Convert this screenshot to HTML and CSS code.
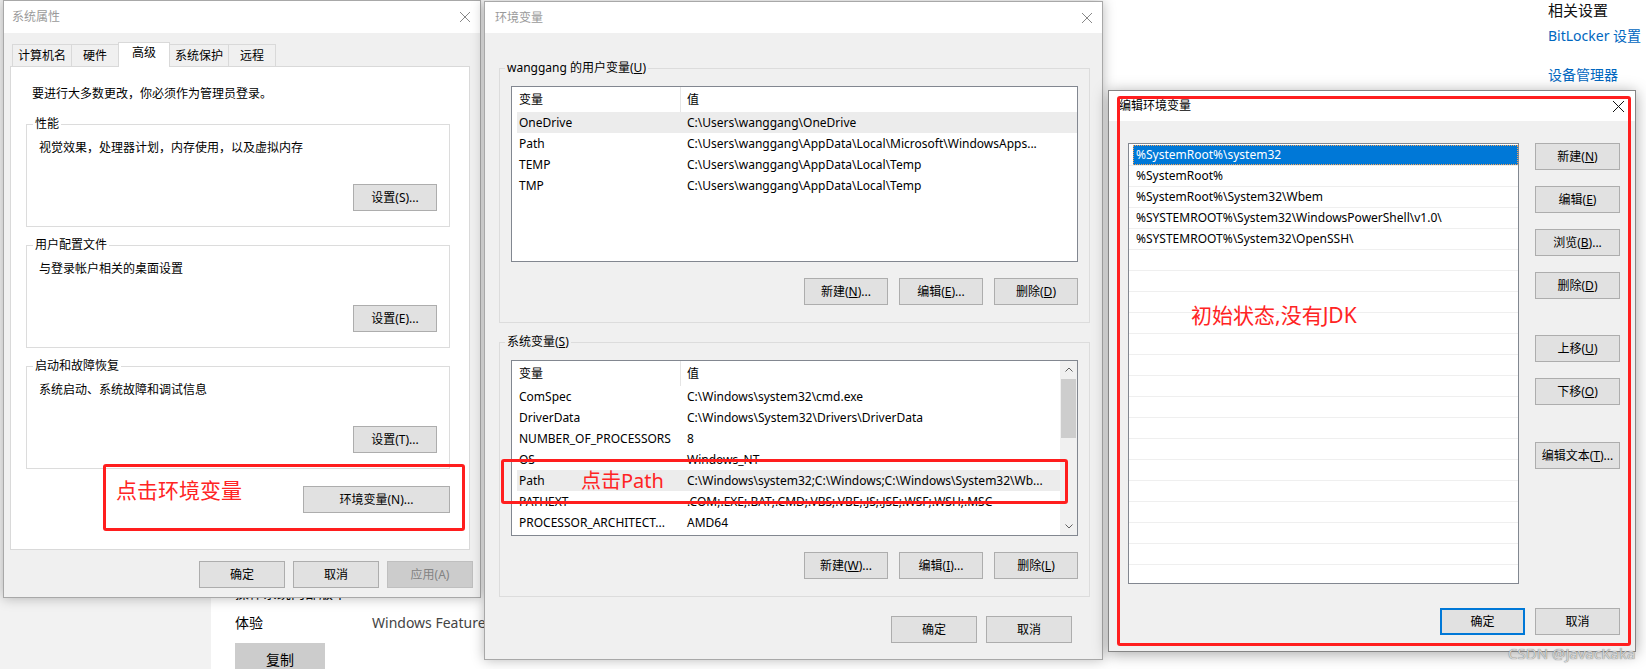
FILE: index.html
```html
<!doctype html>
<html>
	<head>
		<meta charset="utf-8"/>
		<title>环境变量</title>
		<link rel="stylesheet" href="styles.css">
	</head>
	<body>
		<div class="desk">
			<!-- 背后的设置页 -->
			<div class="side"></div>
			<div class="about">
				<div class="info"><span class="k">操作系统内部版本</span><span class="v">19044.2251</span></div>
				<div class="info"><span class="k">体验</span><span class="v">Windows Feature Experience Pack 120.2212.4180.0</span></div>
				<button class="copy">复制</button>
			</div>
			<div class="related">
				<h3>相关设置</h3>
				<a>BitLocker 设置</a>
				<a>设备管理器</a>
			</div>

			<!-- 系统属性 -->
			<section class="win sys">
				<div class="tbar"><span>系统属性</span>
					<svg class="x" width="10" height="10" viewBox="0 0 10 10"><path d="M0 0L10 10M10 0L0 10" stroke="currentColor" stroke-width="1"/></svg>
				</div>
				<div class="tabs">
					<span class="tab">计算机名</span><span class="tab">硬件</span><span class="tab on">高级</span><span class="tab">系统保护</span><span class="tab">远程</span>
				</div>
				<div class="panel">
					<p class="tip">要进行大多数更改，你必须作为管理员登录。</p>
					<fieldset class="grp">
						<legend>性能</legend>
						<p>视觉效果，处理器计划，内存使用，以及虚拟内存</p>
						<div class="acts"><button class="btn">设置(S)...</button></div>
					</fieldset>
					<fieldset class="grp">
						<legend>用户配置文件</legend>
						<p>与登录帐户相关的桌面设置</p>
						<div class="acts"><button class="btn">设置(E)...</button></div>
					</fieldset>
					<fieldset class="grp">
						<legend>启动和故障恢复</legend>
						<p>系统启动、系统故障和调试信息</p>
						<div class="acts"><button class="btn">设置(T)...</button></div>
					</fieldset>
					<div class="envrow"><button class="btn">环境变量(N)...</button></div>
				</div>
				<div class="foot">
					<button class="btn">确定</button><button class="btn">取消</button><button class="btn" disabled>应用(A)</button>
				</div>
				<div class="mark-box mb-sys"></div>
				<div class="mark-txt mt-sys">点击环境变量</div>
			</section>

			<!-- 环境变量 -->
			<section class="win env">
				<div class="tbar"><span>环境变量</span>
					<svg class="x" width="10" height="10" viewBox="0 0 10 10"><path d="M0 0L10 10M10 0L0 10" stroke="currentColor" stroke-width="1"/></svg>
				</div>
				<div class="body">
					<fieldset class="grp">
						<legend>wanggang 的用户变量(<u>U</u>)</legend>
						<div class="lv">
							<div class="cols">
								<div class="hd"><span>变量</span><span>值</span></div>
								<div class="r hl"><span>OneDrive</span><span>C:\Users\wanggang\OneDrive</span></div>
								<div class="r"><span>Path</span><span>C:\Users\wanggang\AppData\Local\Microsoft\WindowsApps...</span></div>
								<div class="r"><span>TEMP</span><span>C:\Users\wanggang\AppData\Local\Temp</span></div>
								<div class="r"><span>TMP</span><span>C:\Users\wanggang\AppData\Local\Temp</span></div>
							</div>
						</div>
						<div class="acts">
							<button class="btn">新建(<u>N</u>)...</button><button class="btn">编辑(<u>E</u>)...</button><button class="btn">删除(<u>D</u>)</button>
						</div>
					</fieldset>
					<fieldset class="grp">
						<legend>系统变量(<u>S</u>)</legend>
						<div class="lv">
							<div class="cols">
								<div class="hd"><span>变量</span><span>值</span></div>
								<div class="r"><span>ComSpec</span><span>C:\Windows\system32\cmd.exe</span></div>
								<div class="r"><span>DriverData</span><span>C:\Windows\System32\Drivers\DriverData</span></div>
								<div class="r"><span>NUMBER_OF_PROCESSORS</span><span>8</span></div>
								<div class="r"><span>OS</span><span>Windows_NT</span></div>
								<div class="r hl"><span>Path</span><span>C:\Windows\system32;C:\Windows;C:\Windows\System32\Wb...</span></div>
								<div class="r"><span>PATHEXT</span><span>.COM;.EXE;.BAT;.CMD;.VBS;.VBE;.JS;.JSE;.WSF;.WSH;.MSC</span></div>
								<div class="r"><span>PROCESSOR_ARCHITECT...</span><span>AMD64</span></div>
							</div>
							<div class="sb">
								<div class="arr"><svg width="8" height="5" viewBox="0 0 8 5"><path d="M0.5 4.5L4 1L7.5 4.5" fill="none" stroke="#606060"/></svg></div>
								<div class="thumb"></div>
								<div class="fill"></div>
								<div class="arr"><svg width="8" height="5" viewBox="0 0 8 5"><path d="M0.5 0.5L4 4L7.5 0.5" fill="none" stroke="#606060"/></svg></div>
							</div>
						</div>
						<div class="acts">
							<button class="btn">新建(<u>W</u>)...</button><button class="btn">编辑(<u>I</u>)...</button><button class="btn">删除(<u>L</u>)</button>
						</div>
					</fieldset>
				</div>
				<div class="foot">
					<button class="btn">确定</button><button class="btn">取消</button>
				</div>
				<div class="mark-box mb-env"></div>
				<div class="mark-txt mt-env">点击Path</div>
			</section>

			<!-- 编辑环境变量 -->
			<section class="win edit">
				<div class="tbar"><span>编辑环境变量</span>
					<svg class="x" width="11" height="11" viewBox="0 0 11 11"><path d="M0 0L11 11M11 0L0 11" stroke="currentColor" stroke-width="1"/></svg>
				</div>
				<div class="body">
					<div class="elist">
						<div class="r sel"><span>%SystemRoot%\system32</span></div>
						<div class="r">%SystemRoot%</div>
						<div class="r">%SystemRoot%\System32\Wbem</div>
						<div class="r">%SYSTEMROOT%\System32\WindowsPowerShell\v1.0\</div>
						<div class="r">%SYSTEMROOT%\System32\OpenSSH\</div>
						<div class="r"></div><div class="r"></div><div class="r"></div><div class="r"></div>
						<div class="r"></div><div class="r"></div><div class="r"></div><div class="r"></div>
						<div class="r"></div><div class="r"></div><div class="r"></div><div class="r"></div>
						<div class="r"></div><div class="r"></div><div class="r"></div><div class="r"></div>
					</div>
					<div class="ebtns">
						<button class="btn">新建(<u>N</u>)</button>
						<button class="btn">编辑(<u>E</u>)</button>
						<button class="btn">浏览(<u>B</u>)...</button>
						<button class="btn">删除(<u>D</u>)</button>
						<button class="btn far">上移(<u>U</u>)</button>
						<button class="btn">下移(<u>O</u>)</button>
						<button class="btn far2">编辑文本(<u>T</u>)...</button>
					</div>
				</div>
				<div class="foot">
					<button class="btn def">确定</button><button class="btn">取消</button>
				</div>
				<div class="mark-box mb-edit"></div>
				<div class="mark-txt mt-edit">初始状态,没有JDK</div>
			</section>

			<div class="wm">CSDN @JavacKaka</div>
		</div>
	</body>
</html>
```

FILE: styles.css
```css
html,body{margin:0;padding:0;}
body{font:12px/16px "Noto Sans","Noto Sans CJK SC",sans-serif;color:#000;background:#fff;}
p{margin:0;}
u{text-decoration:underline;text-underline-offset:1px;}

.desk{position:relative;width:1646px;height:669px;overflow:hidden;display:flex;}

/* 背后的设置页 */
.side{width:211px;flex:none;background:#f2f2f2;}
.about{flex:1;min-width:0;padding:583px 0 0 24px;font-size:14px;line-height:20px;}
.info{display:flex;white-space:nowrap;margin-bottom:10px;}
.info .k{width:137px;flex:none;}
.info .v{color:#444;}
.copy{display:block;margin-top:4px;width:90px;height:32px;border:0;background:#ccc;font:14px "Noto Sans","Noto Sans CJK SC",sans-serif;}
.related{width:98px;flex:none;font-size:14px;white-space:nowrap;}
.related h3{margin:0;font-size:15px;line-height:21px;font-weight:normal;color:#111;}
.related a{display:block;color:#0067c0;line-height:18px;margin-top:6px;}
.related a+a{margin-top:21px;}

/* 窗口 */
.win{position:absolute;display:flex;flex-direction:column;background:#f0f0f0;border:1px solid #a8a8a8;box-shadow:0 0 12px rgba(0,0,0,.28);}
.tbar{flex:none;display:flex;align-items:center;background:#fff;padding-left:10px;color:#9a9a9a;}
.tbar .x{margin-left:auto;color:#888;}

.btn{height:27px;box-sizing:border-box;border:1px solid #adadad;background:#e1e1e1;font:inherit;line-height:25px;color:#000;padding:0;white-space:nowrap;}
.btn[disabled]{background:#ccc;border-color:#bfbfbf;color:#838383;}
.foot{flex:none;display:flex;justify-content:flex-end;}

.grp{box-sizing:border-box;min-width:0;margin:0;border:1px solid #dcdcdc;}
.grp legend{padding:0 2px;margin-left:-6px;line-height:16px;}
.acts{display:flex;justify-content:flex-end;}

/* 系统属性 */
.sys{left:3px;top:0;width:476px;height:596px;}
.sys .tbar{height:32px;padding-left:8px;}
.sys .tbar .x{margin-right:10px;}
.tabs{flex:none;display:flex;align-items:flex-end;height:22px;margin:11px 0 0 8px;position:relative;z-index:1;}
.tab{box-sizing:border-box;height:22px;line-height:21px;min-width:48px;padding:0 5px;text-align:center;border:1px solid #d9d9d9;border-bottom:0;margin-right:-1px;background:#f0f0f0;}
.tab.on{height:25px;min-width:52px;margin-bottom:-1px;background:#fff;line-height:20px;position:relative;}
.panel{flex:none;height:482px;margin:0 10px 0 6px;background:#fff;border:1px solid #d9d9d9;}
.tip{margin:19px 0 0 21px;}
.sys .grp{width:424px;margin:14px 0 0 15px;padding:0 12px 15px;}
.sys .grp+.grp{margin-top:10px;}
.sys .grp p{margin-top:8px;}
.sys .grp .acts{margin-top:28px;}
.sys .grp .btn{width:84px;}
.envrow{width:424px;margin:17px 0 0 15px;display:flex;justify-content:flex-end;}
.envrow .btn{width:147px;}
.sys .foot{gap:8px;padding:11px 7px 0 0;}
.sys .foot .btn{width:86px;}

/* 环境变量 */
.env{left:484px;top:1px;width:617px;height:657px;}
.env .tbar{height:31px;}
.env .tbar .x{margin-right:10px;}
.env .body{padding:0 12px 0 14px;}
.env .grp{width:591px;margin-top:27px;padding:0 11px 17px;}
.env .grp+.grp{margin-top:11px;}
.env .acts{gap:11px;margin-top:16px;}
.env .acts .btn{width:84px;}
.env .foot{gap:9px;padding:19px 30px 0 0;}
.env .foot .btn{width:86px;}

.lv{height:176px;box-sizing:border-box;margin-top:10px;background:#fff;border:1px solid #828790;display:flex;overflow:hidden;}
.lv .cols{flex:1;min-width:0;}
.lv .hd,.lv .r{display:grid;grid-template-columns:163px 379px;margin-left:5px;white-space:nowrap;}
.lv .hd{height:25px;line-height:25px;}
.lv .r{height:21px;line-height:21px;}
.lv span{overflow:hidden;}
.lv span:first-child{padding-left:2px;}
.lv span+span{padding-left:7px;}
.lv .hd span+span{border-left:1px solid #e5e5e5;padding-left:6px;}
.lv .r.hl{background:#ececec;}
.sb{width:17px;flex:none;background:#f0f0f0;display:flex;flex-direction:column;align-items:center;}
.sb .arr{height:17px;display:flex;align-items:center;justify-content:center;}
.sb .arr svg{display:block;}
.sb .thumb{width:15px;height:59px;margin-top:1px;background:#cdcdcd;}
.sb .fill{flex:1;}

/* 编辑环境变量 */
.edit{left:1108px;top:90px;width:526px;height:560px;border-color:#858585;box-shadow:0 2px 14px rgba(0,0,0,.35);}
.edit .tbar{height:30px;color:#000;}
.edit .tbar .x{color:#111;margin-right:11px;}
.edit .body{display:flex;gap:16px;padding:22px 15px 0 19px;}
.elist{width:391px;height:441px;flex:none;box-sizing:border-box;padding-top:1px;border:1px solid #828790;background:#fff;overflow:hidden;}
.elist .r{height:21px;box-sizing:border-box;line-height:20px;padding-left:7px;border-bottom:1px solid #efefef;white-space:nowrap;}
.elist .r.sel{padding-left:4px;}
.elist .r.sel span{display:block;height:20px;padding-left:3px;background:#0078d7;color:#fff;outline:1px dotted #f3a35a;outline-offset:-1px;}
.ebtns{width:85px;display:flex;flex-direction:column;gap:16px;}
.ebtns .far{margin-top:20px;}
.ebtns .far2{margin-top:21px;}
.edit .foot{gap:10px;padding:24px 15px 0 0;}
.edit .foot .btn{width:85px;}
.edit .foot .def{border:2px solid #0078d7;line-height:23px;}

/* 标注 */
.mark-box{position:absolute;box-sizing:border-box;border:3px solid #ff1e1e;border-radius:3px;pointer-events:none;}
.mark-txt{position:absolute;color:#ff2424;font-size:21px;line-height:24px;white-space:nowrap;}
.mb-sys{left:99px;top:463px;width:362px;height:67px;}
.mt-sys{left:112px;top:477px;}
.mb-env{left:16px;top:457px;width:567px;height:45px;}
.mt-env{left:96px;top:467px;font-size:20px;}
.mb-edit{left:8px;top:5px;width:514px;height:550px;}
.mt-edit{left:82px;top:212px;}

.wm{position:absolute;left:1508px;top:645px;font-size:15px;line-height:16px;color:#d4d4d4;text-shadow:0 0 1px #5a5a5a;white-space:nowrap;}
```
